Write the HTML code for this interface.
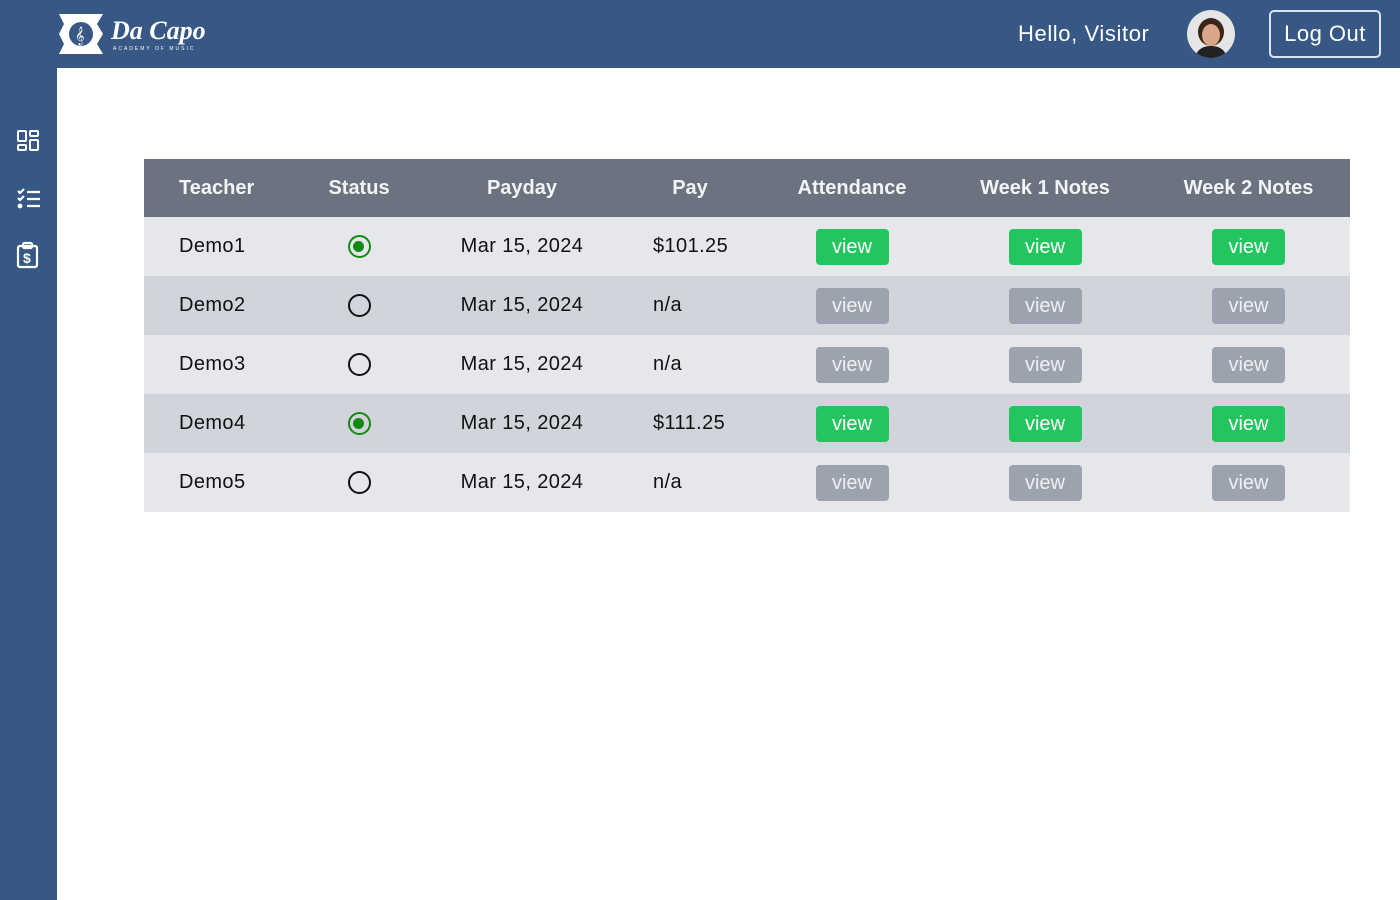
<!DOCTYPE html>
<html><head><style>
*{margin:0;padding:0;box-sizing:border-box}
body{width:1400px;height:900px;background:#fff;font-family:"Liberation Sans",sans-serif;position:relative;overflow:hidden}
.top{position:absolute;left:0;top:0;width:1400px;height:68px;background:#375884}
.side{position:absolute;left:0;top:0;width:57px;height:900px;background:#375884}
.hello{position:absolute;left:1018px;top:21px;color:#fff;font-size:22px;letter-spacing:0.6px}
.av{position:absolute;left:1187px;top:10px;width:48px;height:48px;border-radius:50%;background:#e5e5e5;overflow:hidden}
.lo{position:absolute;left:1269px;top:10px;width:112px;height:48px;border:2px solid #dbe4f0;border-radius:5px;color:#fff;font-size:22px;text-align:center;line-height:44px;letter-spacing:0.5px}
table{position:absolute;left:144px;top:159px;width:1206px;border-collapse:collapse;font-size:20px;color:#111}
th{background:#6b7280;color:#f3f4f6;height:58px;font-weight:bold;text-align:center}
td{height:59px;text-align:center;letter-spacing:0.4px}
tr:nth-child(even) td{background:#e5e7eb}
tr:nth-child(odd) td{background:#d1d5db}
.l{text-align:left;padding-left:35px}
.p{text-align:left;padding-left:34px}
.b{display:inline-block;width:73px;height:36px;line-height:36px;border-radius:4px;color:#fff;font-size:20px;letter-spacing:0}
.g{background:#22c55e}.x{background:#9ca3af;color:#eef0f3}
.r{display:inline-block;width:23px;height:23px;border-radius:50%;border:2.5px solid #111;vertical-align:middle;position:relative}
.r.on{border-color:#138a13}
.r.on::after{content:"";position:absolute;left:3.5px;top:3.5px;width:11px;height:11px;border-radius:50%;background:#138a13}
</style></head><body>
<div class="top"></div><div class="side"></div>
<svg style="position:absolute;left:57px;top:12px" width="160" height="46">
<path d="M2 2h44l-6 10 6 10-6 10 6 10H2l5-10-5-10 5-10z" fill="#fff"/>
<circle cx="24" cy="22" r="12" fill="#375884"/>
<text x="18" y="29" font-size="16" fill="#fff">&#119070;</text>
<text x="54" y="27" font-family="Liberation Serif" font-style="italic" font-weight="bold" font-size="26" fill="#fff">Da Capo</text>
<text x="56" y="38" font-size="5" fill="#fff" letter-spacing="2">ACADEMY OF MUSIC</text>
</svg>
<svg style="position:absolute;left:16px;top:129px" width="24" height="24" fill="none" stroke="#fff" stroke-width="2"><rect x="2" y="2" width="8" height="10" rx="1"/><rect x="14" y="2" width="8" height="5" rx="1"/><rect x="2" y="16" width="8" height="5" rx="1"/><rect x="14" y="11" width="8" height="10" rx="1"/></svg>
<svg style="position:absolute;left:16px;top:187px" width="26" height="24" fill="none" stroke="#fff" stroke-width="2.2"><path d="M2 4l2 2 4-4M2 11l2 2 4-4"/><circle cx="4" cy="19" r="1.3" fill="#fff"/><path d="M11 5h13M11 12h13M11 19h13"/></svg>
<svg style="position:absolute;left:16px;top:241px" width="24" height="28" fill="none" stroke="#fff" stroke-width="2.2"><rect x="2" y="5" width="19" height="21" rx="2"/><rect x="7" y="2" width="9" height="5" rx="1.5"/><text x="7" y="22" font-size="14" font-weight="bold" fill="#fff" stroke="none">$</text></svg>
<div class="hello">Hello, Visitor</div>
<div class="av"><svg width="48" height="48"><ellipse cx="24" cy="22" rx="13" ry="14" fill="#3b2418"/><ellipse cx="24" cy="25" rx="9" ry="11" fill="#d9a68a"/><path d="M8 48c2-10 10-12 16-12s14 2 16 12z" fill="#222"/></svg></div>
<div class="lo">Log Out</div>
<table>
<tr><th style="width:149px;text-align:left;padding-left:35px">Teacher</th><th style="width:132px">Status</th><th style="width:194px">Payday</th><th style="width:142px">Pay</th><th style="width:182px">Attendance</th><th style="width:204px">Week 1 Notes</th><th>Week 2 Notes</th></tr>
<tr><td class="l">Demo1</td><td><span class="r on"></span></td><td>Mar 15, 2024</td><td class="p">$101.25</td><td><span class="b g">view</span></td><td><span class="b g">view</span></td><td><span class="b g">view</span></td></tr>
<tr><td class="l">Demo2</td><td><span class="r"></span></td><td>Mar 15, 2024</td><td class="p">n/a</td><td><span class="b x">view</span></td><td><span class="b x">view</span></td><td><span class="b x">view</span></td></tr>
<tr><td class="l">Demo3</td><td><span class="r"></span></td><td>Mar 15, 2024</td><td class="p">n/a</td><td><span class="b x">view</span></td><td><span class="b x">view</span></td><td><span class="b x">view</span></td></tr>
<tr><td class="l">Demo4</td><td><span class="r on"></span></td><td>Mar 15, 2024</td><td class="p">$111.25</td><td><span class="b g">view</span></td><td><span class="b g">view</span></td><td><span class="b g">view</span></td></tr>
<tr><td class="l">Demo5</td><td><span class="r"></span></td><td>Mar 15, 2024</td><td class="p">n/a</td><td><span class="b x">view</span></td><td><span class="b x">view</span></td><td><span class="b x">view</span></td></tr>
</table>
</body></html>
